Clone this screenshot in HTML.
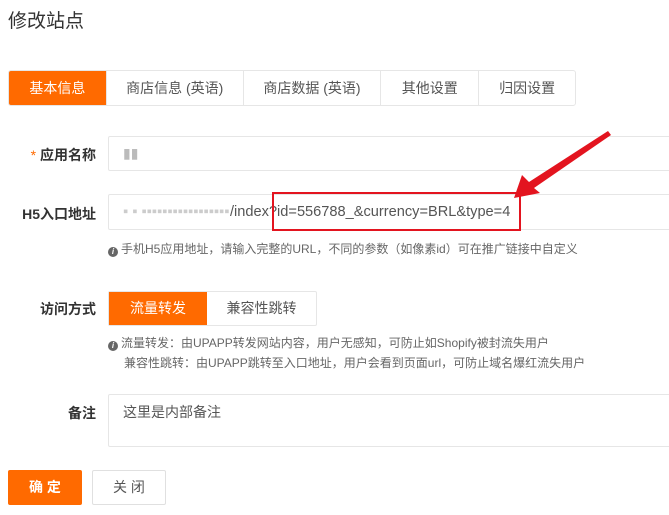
<!DOCTYPE html>
<html><head><meta charset="utf-8"><style>
*{margin:0;padding:0;box-sizing:border-box}
body{width:669px;height:515px;background:#fff;font-family:"Liberation Sans","Noto Sans CJK SC",sans-serif;color:#333;position:relative;overflow:hidden}
.a{position:absolute}
.t{font-size:19px;left:8px;top:6px;color:#333}
.tabs{left:8px;top:70px;height:36px;width:568px;border:1px solid #e6e6e6;border-radius:3px;display:flex}
.tabs div{height:34px;line-height:34px;text-align:center;font-size:14px;color:#555;border-right:1px solid #e6e6e6}
.tabs div.on{background:#ff6a00;color:#fff;border-radius:2px 0 0 2px}
.lbl{font-size:14px;color:#333;font-weight:bold;text-align:right;width:88px;left:8px}
.in{left:108px;width:600px;border:1px solid #e6e6e6;border-radius:2px;font-size:14px;color:#555;padding-left:14px}
.hint{font-size:12px;color:#666;left:108px}
.i{display:inline-block;width:10px;height:10px;border-radius:50%;background:#666;color:#fff;font-size:8px;line-height:10px;text-align:center;font-style:italic;font-weight:bold;margin-right:3px;vertical-align:-1px}
.btn{height:35px;line-height:33px;text-align:center;font-size:14px;border-radius:2px}
</style></head><body>
<div class="a t">修改站点</div>
<div class="a tabs">
<div class="on" style="width:98px">基本信息</div>
<div style="width:137px">商店信息 (英语)</div>
<div style="width:138px">商店数据 (英语)</div>
<div style="width:98px">其他设置</div>
<div style="width:96px;border-right:none">归因设置</div>
</div>
<div class="a lbl" style="top:145px"><span style="color:#ff6a00;font-weight:normal">* </span>应用名称</div>
<div class="a in" style="top:136px;height:35px;line-height:33px;color:#bbb">▮▮</div>
<div class="a lbl" style="top:204px">H5入口地址</div>
<div class="a in" style="top:194px;height:36px;line-height:34px;font-size:14.6px"><span style="display:inline-block;width:107px;color:#ccc;overflow:hidden;white-space:nowrap;vertical-align:top">▪ ▪ ▪▪▪▪▪▪▪▪▪▪▪▪▪▪▪▪▪</span>/index?id=556788_&amp;currency=BRL&amp;type=4</div>
<div class="a" style="left:272px;top:192px;width:249px;height:39px;border:2px solid #e3141f"></div>
<div class="a hint" style="top:240px"><span class="i">i</span>手机H5应用地址，请输入完整的URL，不同的参数（如像素id）可在推广链接中自定义</div>
<div class="a lbl" style="top:299px">访问方式</div>
<div class="a" style="left:108px;top:291px;width:209px;height:35px;border:1px solid #e6e6e6;border-radius:2px;display:flex;font-size:14px">
<div style="width:98px;background:#ff6a00;color:#fff;text-align:center;line-height:33px">流量转发</div>
<div style="flex:1;text-align:center;line-height:33px;color:#555">兼容性跳转</div></div>
<div class="a hint" style="top:333px;line-height:20px"><span class="i">i</span>流量转发：由UPAPP转发网站内容，用户无感知，可防止如Shopify被封流失用户<br><span style="margin-left:16px">兼容性跳转：由UPAPP跳转至入口地址，用户会看到页面url，可防止域名爆红流失用户</span></div>
<div class="a lbl" style="top:403px">备注</div>
<div class="a in" style="top:394px;height:53px;padding-top:7px;font-size:14px">这里是内部备注</div>
<div class="a btn" style="left:8px;top:470px;width:74px;background:#ff6a00;color:#fff;font-weight:bold;border:1px solid #ff6a00">确 定</div>
<div class="a btn" style="left:92px;top:470px;width:74px;border:1px solid #e0e0e0;color:#555">关 闭</div>
<svg class="a" style="left:0;top:0" width="669" height="515"><polygon points="514,198 522,175 529,182 608,131 611,135 534,188 540,193" fill="#e3141f"/></svg>
</body></html>
